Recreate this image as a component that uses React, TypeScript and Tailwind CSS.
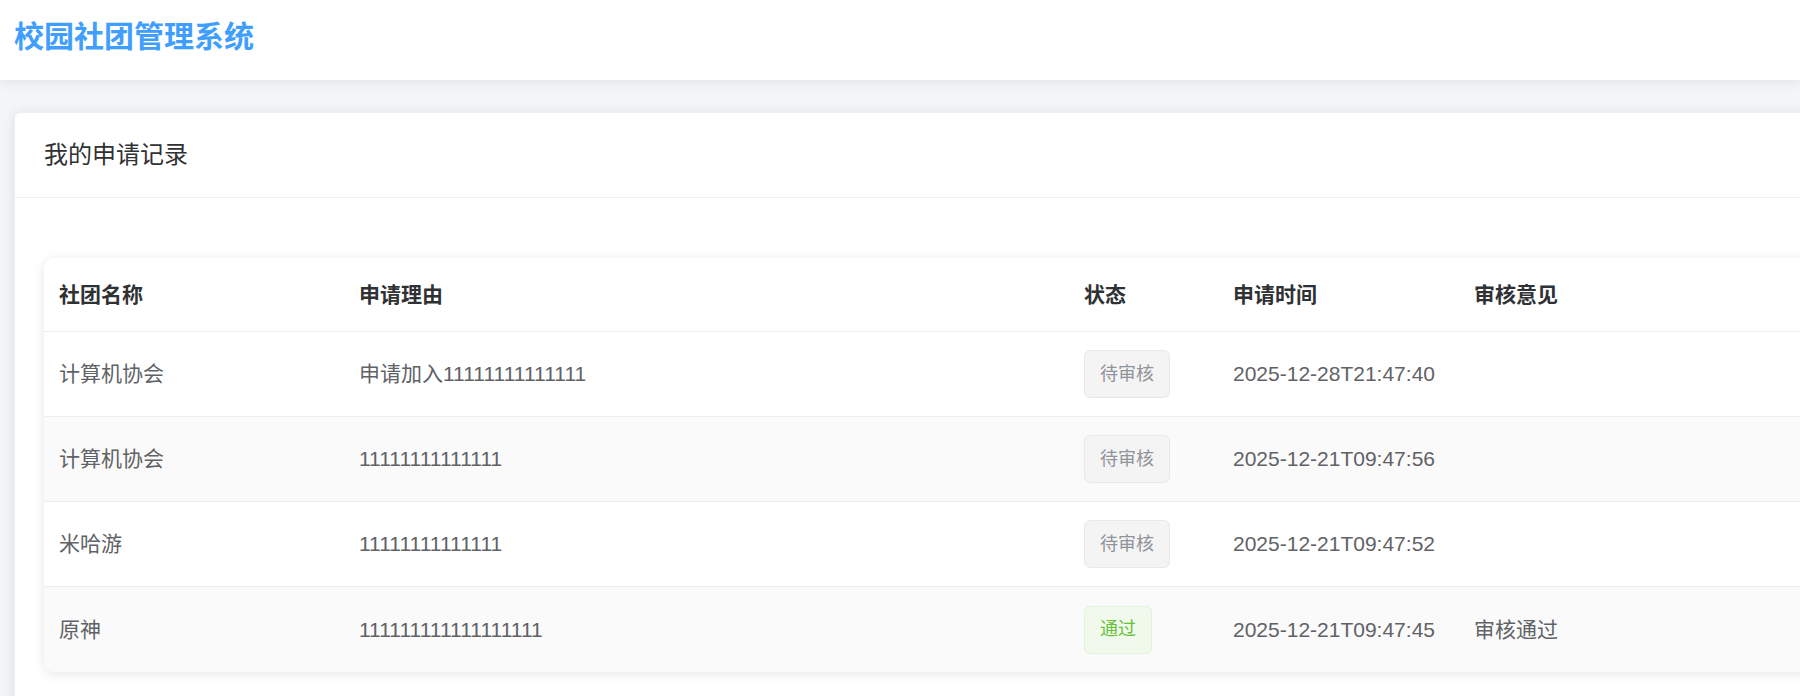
const rows = [
    { club: '计算机协会', reason: '申请加入11111111111111', status: 'pending', time: '2025-12-28T21:47:40', remark: '' },
    { club: '计算机协会', reason: '11111111111111', status: 'pending', time: '2025-12-21T09:47:56', remark: '' },
    { club: '米哈游', reason: '11111111111111', status: 'pending', time: '2025-12-21T09:47:52', remark: '' },
    { club: '原神', reason: '111111111111111111', status: 'approved', time: '2025-12-21T09:47:45', remark: '审核通过' },
];

const StatusTag = ({ status }: { status: string }) =>
    status === 'approved' ? (
        <span className="inline-flex h-[48px] items-center rounded-[6px] border border-[#e1f3d8] bg-[#f0f9eb] px-[15px] text-[18px] text-[#67c23a]">
            通过
        </span>
    ) : (
        <span className="inline-flex h-[48px] items-center rounded-[6px] border border-[#e9e9eb] bg-[#f4f4f5] px-[15px] text-[18px] text-[#909399]">
            待审核
        </span>
    );

const App = () => {
    return (
        <div className="min-h-[696px] overflow-hidden bg-[#f4f5f8] font-['Liberation_Sans','Noto_Sans_CJK_SC',sans-serif]">
            <header className="relative z-10 flex h-[80px] items-center bg-white px-[14px] pb-[8px] shadow-[0_2px_12px_0_rgba(0,0,0,0.08)]">
                <h1 className="text-[30px] font-bold text-[#409eff]">校园社团管理系统</h1>
            </header>

            <main className="pt-[32px] pl-[14px]">
                <div className="-mr-[40px] rounded-[6px] border border-[#ebeef5] bg-white shadow-[0_2px_12px_0_rgba(0,0,0,0.1)]">
                    <div className="flex h-[85px] items-center border-b border-[#ebeef5] px-[29px] text-[24px] text-[#303133]">
                        我的申请记录
                    </div>

                    <div className="px-[29px] pt-[60px] pb-[30px]">
                        <div className="overflow-hidden rounded-[10px] bg-white text-[21px] text-[#606266] shadow-[0_2px_12px_0_rgba(0,0,0,0.1)]">
                            <div className="grid h-[74px] grid-cols-[300px_725px_149px_241px_1fr] items-center border-b border-[#ebeef5] font-bold text-[#303133]">
                                <div className="px-[15px]">社团名称</div>
                                <div className="px-[15px]">申请理由</div>
                                <div className="px-[15px]">状态</div>
                                <div className="px-[15px]">申请时间</div>
                                <div className="px-[15px]">审核意见</div>
                            </div>
                            {rows.map((row, index) => (
                                <div
                                    key={index}
                                    className={`grid h-[85px] grid-cols-[300px_725px_149px_241px_1fr] items-center ${index < rows.length - 1 ? 'border-b border-[#ebeef5]' : ''} ${index % 2 === 1 ? 'bg-[#fafafa]' : 'bg-white'}`}
                                >
                                    <div className="px-[15px]">{row.club}</div>
                                    <div className="px-[15px]">{row.reason}</div>
                                    <div className="px-[15px]">
                                        <StatusTag status={row.status} />
                                    </div>
                                    <div className="px-[15px]">{row.time}</div>
                                    <div className="px-[15px]">{row.remark}</div>
                                </div>
                            ))}
                        </div>
                    </div>
                </div>
            </main>
        </div>
    );
};

export default App;
